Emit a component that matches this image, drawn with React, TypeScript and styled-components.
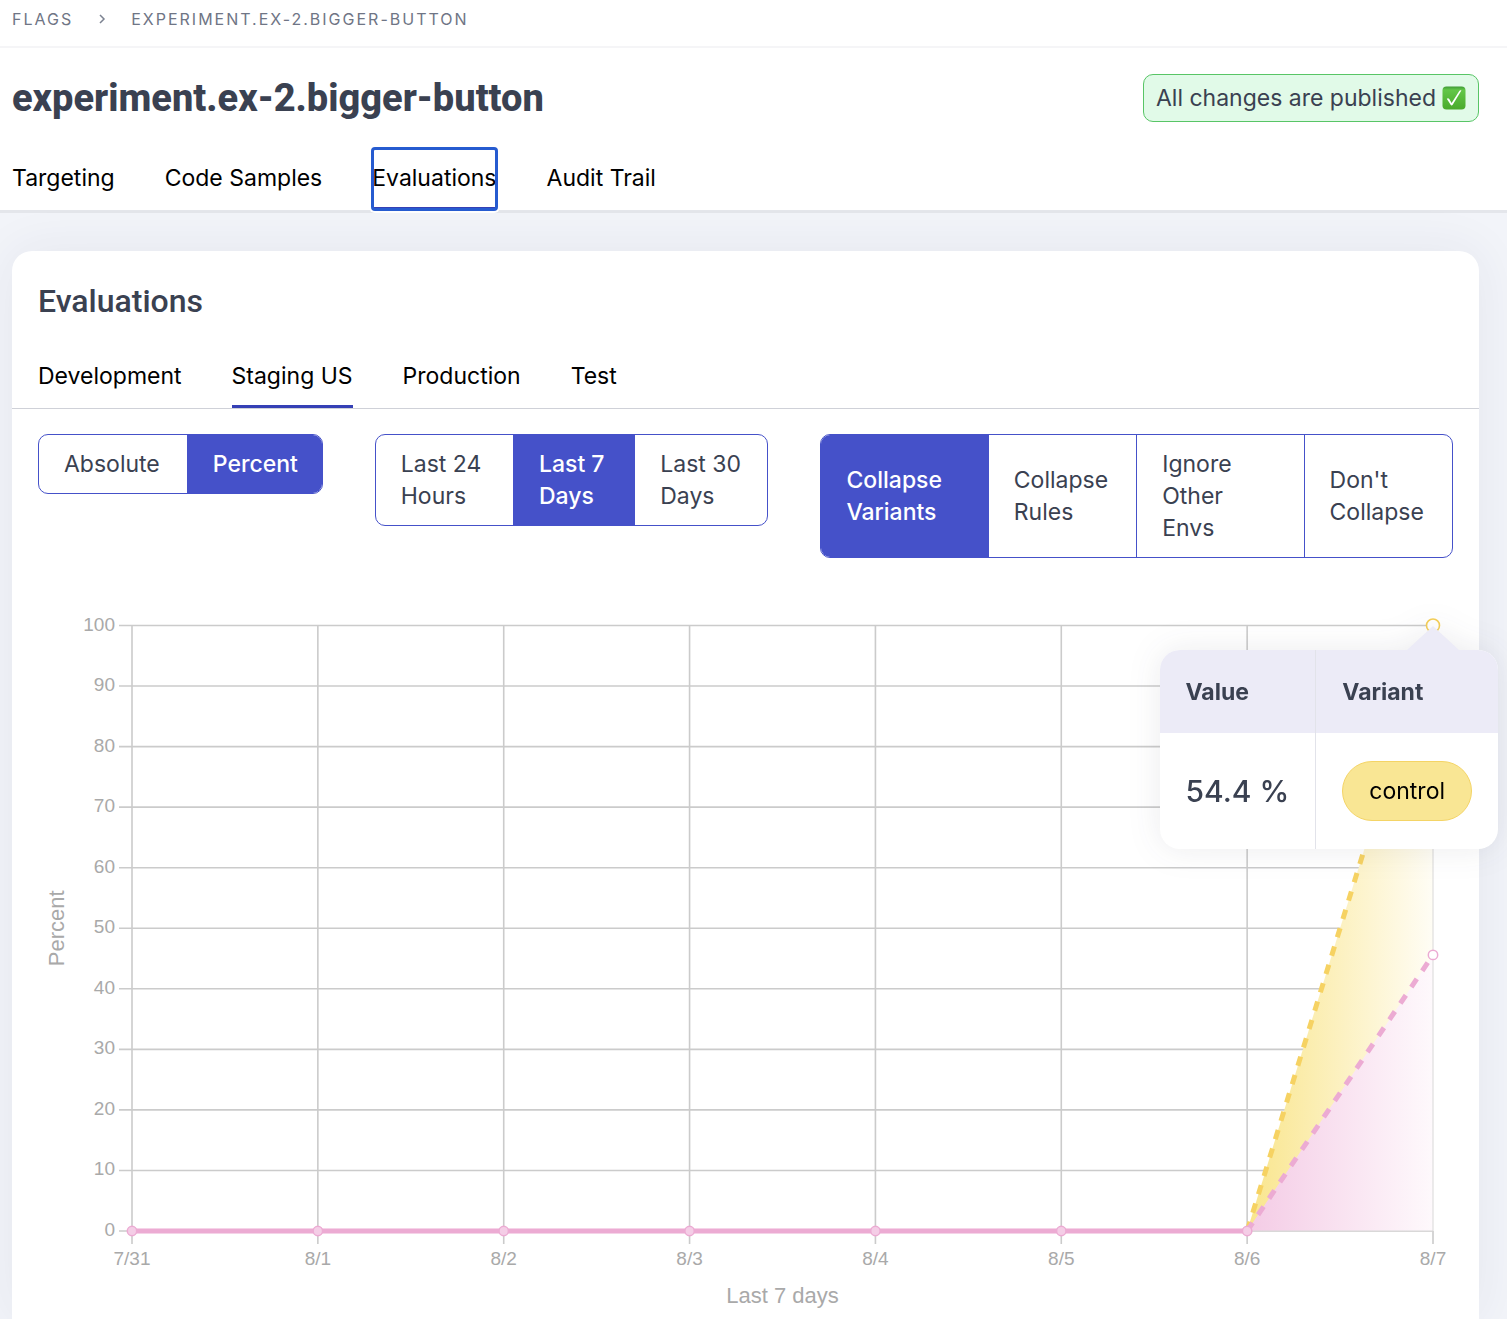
import { useLayoutEffect, useRef, useState } from "react";
import styled, { createGlobalStyle } from "styled-components";

const sans = `Inter, "Liberation Sans", sans-serif`;
const display = `Roboto, "Liberation Sans", sans-serif`;
const ink = "#3a4151";
const primary = "#4551c9";

const GlobalStyle = createGlobalStyle`
  *, *::before, *::after { box-sizing: border-box; }
  body { margin: 0; background: #f2f4f9; color: ${ink}; font: 400 23px/32px ${sans}; }
  button { font: inherit; color: inherit; background: none; border: 0; padding: 0; margin: 0; cursor: pointer; }
  h1, h2 { margin: 0; }
`;

const Page = styled.div`
  min-height: 100vh;
  display: flex;
  flex-direction: column;
  overflow: hidden;
`;

const Breadcrumbs = styled.nav`
  display: flex;
  align-items: center;
  gap: 25px;
  height: 48px;
  padding: 0 12px 8px;
  background: #fff;
  border-bottom: 2px solid #f5f5f7;
  font-size: 16px;
  line-height: 24px;
  letter-spacing: 2px;
  color: #6f7585;
  text-transform: uppercase;
  a { color: inherit; text-decoration: none; }
`;

const Header = styled.header`
  background: #fff;
  border-bottom: 3px solid #e4e6eb;
  padding: 26px 28px 0 12px;
`;

const TitleRow = styled.div`
  display: flex;
  align-items: center;
  justify-content: space-between;
  height: 48px;
`;

const Title = styled.h1`
  font: 800 38px/48px ${display};
`;

const Status = styled.div`
  display: flex;
  align-items: center;
  gap: 6px;
  height: 48px;
  padding: 0 12px;
  border: 1px solid #58c566;
  border-radius: 10px;
  background: #e1fae8;
`;

const Tabs = styled.div<{ $inset?: boolean }>`
  display: flex;
  gap: 50px;
  margin-top: 26px;
  ${(p) => p.$inset && "margin-top: 20px; padding: 0 26px; border-bottom: 1px solid #cfd1d8;"}
`;

const Tab = styled.button<{ $active?: boolean; $ring?: boolean }>`
  height: ${(p) => (p.$ring !== undefined ? 62 : 63)}px;
  padding-top: 1px;
  color: #000;
  white-space: nowrap;
  border-bottom: 3px solid ${(p) => (p.$active ? "#3540b5" : "transparent")};
  ${(p) => p.$ring && "border-radius: 3px; outline: 3px solid #265bd0; outline-offset: -2px; box-shadow: 0 0 0 3px #fff;"}
`;

const Main = styled.main`
  flex: 1;
  display: flex;
  padding: 38px 28px 0 12px;
`;

const Card = styled.section`
  flex: 1;
  min-width: 0;
  background: #fff;
  border-radius: 20px 20px 0 0;
  box-shadow: 0 0 52px rgba(40, 40, 90, 0.07);
  padding-top: 26px;
`;

const CardTitle = styled.h2`
  padding: 0 26px;
  font: 500 32px/48px ${display};
`;

const Filters = styled.div`
  display: grid;
  grid-template-columns: 285fr 394fr 633fr;
  gap: 52px;
  align-items: start;
  padding: 25px 26px 0;
`;

const Segments = styled.div`
  display: flex;
  border: 1px solid ${primary};
  border-radius: 10px;
  overflow: hidden;
`;

const Segment = styled.button<{ $weight: number }>`
  flex: ${(p) => `${p.$weight} 1 ${p.$weight}px`};
  min-width: 0;
  padding: 13px 25px;
  text-align: left;
  & + & { border-left: 1px solid ${primary}; }
  &[aria-pressed="true"] { background: ${primary}; color: #fff; font-weight: 500; }
`;

const ChartArea = styled.div`
  position: relative;
  margin: 42px 26px 0;
  svg { display: block; }
  text { font-family: "Liberation Sans", Arial, sans-serif; fill: #a9a9a9; }
`;

const Tooltip = styled.div`
  position: absolute;
  top: 50px;
  right: -45px;
  border-radius: 20px;
  filter: drop-shadow(0 0 16px rgba(40, 40, 70, 0.09));
  &::before {
    content: "";
    position: absolute;
    right: 39px;
    bottom: 100%;
    border: 26px solid transparent;
    border-top-width: 0;
    border-bottom: 24px solid #ecebf7;
  }
`;

const TipTable = styled.table`
  border-collapse: separate;
  border-spacing: 0;
  border-radius: 20px;
  overflow: hidden;
  background: #fff;
  th { height: 83px; padding: 0 26px; background: #ecebf7; text-align: left; font-weight: 700; }
  td { height: 116px; padding: 0 26px; font-size: 30px; font-weight: 500; white-space: nowrap; }
  th + th, td + td { border-left: 1px solid #e2e3ea; }
`;

const Pill = styled.span`
  display: flex;
  align-items: center;
  height: 60px;
  padding: 0 26px;
  border: 1px solid #f4d466;
  border-radius: 30px;
  background: #f9e694;
  color: #000;
  font-size: 23px;
  font-weight: 400;
`;

const CheckMark = () => (
  <svg width="24" height="24" viewBox="0 0 24 24" role="img" aria-label="Done">
    <defs>
      <linearGradient id="check-fill" x1="0" y1="0" x2="0" y2="1">
        <stop offset="0" stopColor="#3f9936" />
        <stop offset="0.15" stopColor="#63c648" />
        <stop offset="1" stopColor="#49aa2b" />
      </linearGradient>
    </defs>
    <rect x="0.5" y="0.5" width="23" height="23" rx="4" fill="url(#check-fill)" />
    <path d="M4.8 12.7c1-.8 1.8-.7 2.5.4l2.3 3.8L17.3 5c.5-.7 1.3-.9 2.1-.5L10.7 18.8c-.6.9-1.6.9-2.1 0z" fill="#fff" />
  </svg>
);

const days = ["7/31", "8/1", "8/2", "8/3", "8/4", "8/5", "8/6", "8/7"];
const ticks = [0, 10, 20, 30, 40, 50, 60, 70, 80, 90, 100];

function Chart() {
  const box = useRef<HTMLDivElement>(null);
  const [width, setWidth] = useState(1200);
  useLayoutEffect(() => {
    const el = box.current;
    if (!el) return;
    const measure = () => setWidth(el.clientWidth);
    measure();
    const observer = new ResizeObserver(measure);
    observer.observe(el);
    return () => observer.disconnect();
  }, []);

  const left = 94;
  const right = width - 20;
  const x = (i: number) => left + ((right - left) * i) / (days.length - 1);
  const y = (v: number) => 631 - v * 6.055;

  return (
    <ChartArea ref={box}>
      <svg width={width} height="718" role="img" aria-label="Percent of evaluations, last 7 days">
        <defs>
          <linearGradient id="control-fill" gradientUnits="userSpaceOnUse" x1={x(6)} x2={right} y1="0" y2="0">
            <stop offset="0" stopColor="#f9e58c" />
            <stop offset="1" stopColor="#fffdf5" />
          </linearGradient>
          <linearGradient id="variant-fill" gradientUnits="userSpaceOnUse" x1={x(6)} x2={right} y1="0" y2="0">
            <stop offset="0" stopColor="#f4cbe5" />
            <stop offset="1" stopColor="#fef9fc" />
          </linearGradient>
        </defs>
        <g stroke="#cbcbcb" strokeWidth="1.6">
          {ticks.map((t) => (
            <line key={t} x1={left - 13} x2={right} y1={y(t)} y2={y(t)} />
          ))}
          {days.map((d, i) => (
            <line key={d} x1={x(i)} x2={x(i)} y1={y(i === 7 ? 0 : 100)} y2={y(0) + 13} />
          ))}
        </g>
        <g fontSize="19">
          {ticks.map((t) => (
            <text key={t} x={left - 17} y={y(t) + 5} textAnchor="end">{t}</text>
          ))}
          {days.map((d, i) => (
            <text key={d} x={x(i)} y={y(0) + 34} textAnchor="middle">{d}</text>
          ))}
        </g>
        <g fontSize="22" textAnchor="middle">
          <text x={(left + right) / 2} y="703">Last 7 days</text>
          <text transform={`translate(26 ${y(50)}) rotate(-90)`}>Percent</text>
        </g>
        <path d={`M${x(6)} ${y(0)}L${right} ${y(100)}V${y(0)}Z`} fill="url(#control-fill)" />
        <path d={`M${x(6)} ${y(0)}L${right} ${y(45.6)}V${y(0)}Z`} fill="url(#variant-fill)" />
        <path d={`M${right} ${y(100)}V${y(0)}H${x(6)}`} fill="none" stroke="#d9d8d8" />
        <path d={`M${x(6)} ${y(0)}L${right} ${y(100)}`} stroke="#f6d262" strokeWidth="5" strokeDasharray="9.6 9.6" />
        <path d={`M${x(6)} ${y(0)}L${right} ${y(45.6)}`} stroke="#ecabd3" strokeWidth="5" strokeDasharray="9.8 9.8" />
        <path d={`M${left} ${y(0)}H${x(6)}`} stroke="#f5d3e8" strokeWidth="6" />
        <path d={`M${left} ${y(0)}H${x(6)}`} stroke="#ecabd3" strokeWidth="4" />
        <g stroke="#ecabd3" strokeWidth="1.5">
          {days.slice(0, 7).map((d, i) => (
            <circle key={d} cx={x(i)} cy={y(0)} r="4.7" fill="#f4cde6" />
          ))}
          <circle cx={right} cy={y(45.6)} r="4.7" fill="#fff" />
        </g>
        <circle cx={right} cy={y(100)} r="6.5" fill="#fff" stroke="#f5cf58" strokeWidth="1.6" />
      </svg>
      <Tooltip role="tooltip">
        <TipTable>
          <thead>
            <tr><th scope="col">Value</th><th scope="col">Variant</th></tr>
          </thead>
          <tbody>
            <tr><td>54.4 %</td><td><Pill>control</Pill></td></tr>
          </tbody>
        </TipTable>
      </Tooltip>
    </ChartArea>
  );
}

type Option = [label: string, weight: number];

function Choice({ label, options, initial }: { label: string; options: Option[]; initial: number }) {
  const [selected, setSelected] = useState(initial);
  return (
    <Segments role="group" aria-label={label}>
      {options.map(([text, weight], i) => (
        <Segment key={text} type="button" $weight={weight} aria-pressed={i === selected} onClick={() => setSelected(i)}>
          {text}
        </Segment>
      ))}
    </Segments>
  );
}

export default function App() {
  const [section, setSection] = useState("Evaluations");
  const [env, setEnv] = useState("Staging US");
  return (
    <Page>
      <GlobalStyle />
      <Breadcrumbs aria-label="Breadcrumb">
        <a href="#flags">Flags</a>
        <svg width="8" height="12" viewBox="0 0 8 12" aria-hidden="true">
          <path d="M2 2l4 4-4 4" fill="none" stroke="#7c8291" strokeWidth="1.5" />
        </svg>
        <a href="#flag">experiment.ex-2.bigger-button</a>
      </Breadcrumbs>
      <Header>
        <TitleRow>
          <Title>experiment.ex-2.bigger-button</Title>
          <Status>All changes are published <CheckMark /></Status>
        </TitleRow>
        <Tabs role="tablist">
          {["Targeting", "Code Samples", "Evaluations", "Audit Trail"].map((t) => (
            <Tab key={t} type="button" role="tab" aria-selected={t === section} $active={t === section} $ring={t === section} onClick={() => setSection(t)}>
              {t}
            </Tab>
          ))}
        </Tabs>
      </Header>
      <Main>
        <Card>
          <CardTitle>Evaluations</CardTitle>
          <Tabs role="tablist" $inset>
            {["Development", "Staging US", "Production", "Test"].map((t) => (
              <Tab key={t} type="button" role="tab" aria-selected={t === env} $active={t === env} onClick={() => setEnv(t)}>
                {t}
              </Tab>
            ))}
          </Tabs>
          <Filters>
            <Choice label="Scale" initial={1} options={[["Absolute", 149], ["Percent", 136]]} />
            <Choice label="Period" initial={1} options={[["Last 24 Hours", 138], ["Last 7 Days", 122], ["Last 30 Days", 134]]} />
            <Choice
              label="Grouping"
              initial={0}
              options={[["Collapse Variants", 167], ["Collapse Rules", 149], ["Ignore Other Envs", 168], ["Don't Collapse", 149]]}
            />
          </Filters>
          <Chart />
        </Card>
      </Main>
    </Page>
  );
}
